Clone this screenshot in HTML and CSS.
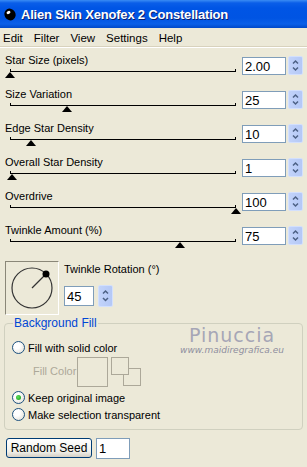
FILE: index.html
```html
<!DOCTYPE html>
<html>
<head>
<meta charset="UTF-8">
<title>Alien Skin Xenofex 2 Constellation</title>
<link rel="stylesheet" href="styles.css">
</head>
<body>
<div class="window">
	<div class="titlebar">
		<svg class="app-icon" width="14" height="14" viewBox="0 0 14 14">
			<ellipse cx="7" cy="7.5" rx="5.5" ry="6" fill="#000" transform="rotate(-30 7 7.5)"/>
			<ellipse cx="5.5" cy="5.5" rx="2" ry="1.5" fill="#fff" transform="rotate(-30 5.5 5.5)"/>
		</svg>
		<span class="title">Alien Skin Xenofex 2 Constellation</span>
	</div>
	<div class="menubar">
		<span>Edit</span><span>Filter</span><span>View</span><span>Settings</span><span>Help</span>
	</div>

	<div class="content">
		<div class="row">
			<div class="control">
				<div class="label">Star Size (pixels)</div>
				<div class="track"><div class="thumb" style="left:0%"></div></div>
			</div>
			<input class="field" type="text" value="2.00">
			<div class="spin"><svg width="13" height="17" viewBox="0 0 13 17"><path d="M4 6.5l2.5-2.5 2.5 2.5M4 10.5l2.5 2.5 2.5-2.5" fill="none" stroke="#4d6185" stroke-width="1.5"/></svg></div>
		</div>
		<div class="row">
			<div class="control">
				<div class="label">Size Variation</div>
				<div class="track"><div class="thumb" style="left:25%"></div></div>
			</div>
			<input class="field" type="text" value="25">
			<div class="spin"><svg width="13" height="17" viewBox="0 0 13 17"><path d="M4 6.5l2.5-2.5 2.5 2.5M4 10.5l2.5 2.5 2.5-2.5" fill="none" stroke="#4d6185" stroke-width="1.5"/></svg></div>
		</div>
		<div class="row">
			<div class="control">
				<div class="label">Edge Star Density</div>
				<div class="track"><div class="thumb" style="left:9.3%"></div></div>
			</div>
			<input class="field" type="text" value="10">
			<div class="spin"><svg width="13" height="17" viewBox="0 0 13 17"><path d="M4 6.5l2.5-2.5 2.5 2.5M4 10.5l2.5 2.5 2.5-2.5" fill="none" stroke="#4d6185" stroke-width="1.5"/></svg></div>
		</div>
		<div class="row">
			<div class="control">
				<div class="label">Overall Star Density</div>
				<div class="track"><div class="thumb" style="left:1%"></div></div>
			</div>
			<input class="field" type="text" value="1">
			<div class="spin"><svg width="13" height="17" viewBox="0 0 13 17"><path d="M4 6.5l2.5-2.5 2.5 2.5M4 10.5l2.5 2.5 2.5-2.5" fill="none" stroke="#4d6185" stroke-width="1.5"/></svg></div>
		</div>
		<div class="row">
			<div class="control">
				<div class="label">Overdrive</div>
				<div class="track"><div class="thumb" style="left:100%"></div></div>
			</div>
			<input class="field" type="text" value="100">
			<div class="spin"><svg width="13" height="17" viewBox="0 0 13 17"><path d="M4 6.5l2.5-2.5 2.5 2.5M4 10.5l2.5 2.5 2.5-2.5" fill="none" stroke="#4d6185" stroke-width="1.5"/></svg></div>
		</div>
		<div class="row">
			<div class="control">
				<div class="label">Twinkle Amount (%)</div>
				<div class="track"><div class="thumb" style="left:75%"></div></div>
			</div>
			<input class="field" type="text" value="75">
			<div class="spin"><svg width="13" height="17" viewBox="0 0 13 17"><path d="M4 6.5l2.5-2.5 2.5 2.5M4 10.5l2.5 2.5 2.5-2.5" fill="none" stroke="#4d6185" stroke-width="1.5"/></svg></div>
		</div>

		<div class="rotation">
			<div class="dial">
				<svg width="51" height="51" viewBox="0 0 51 51">
					<circle cx="26" cy="26" r="20" fill="none" stroke="#333" stroke-width="1.2"/>
					<line x1="26" y1="26" x2="40" y2="12" stroke="#333" stroke-width="1.2"/>
					<circle cx="40" cy="12" r="3.5" fill="#000"/>
				</svg>
			</div>
			<div class="rotation-side">
				<div class="label">Twinkle Rotation (°)</div>
				<div class="rot-input">
					<input class="field small" type="text" value="45">
					<div class="spin"><svg width="13" height="20" viewBox="0 0 13 20"><path d="M4 7.5l2.5-2.5 2.5 2.5M4 12l2.5 2.5 2.5-2.5" fill="none" stroke="#4d6185" stroke-width="1.5"/></svg></div>
				</div>
			</div>
		</div>

		<fieldset class="group">
			<legend>Background Fill</legend>
			<div class="watermark">
				<div class="wm-name">Pinuccia</div>
				<div class="wm-url">www.maidiregrafica.eu</div>
			</div>
			<div class="radio-row"><span class="radio"></span>Fill with solid color</div>
			<div class="fill-color">
				<span class="fill-label">Fill Color</span>
				<span class="swatch"></span>
				<span class="swap"><span class="sq sq2"></span><span class="sq sq1"></span></span>
			</div>
			<div class="radio-row"><span class="radio checked"></span>Keep original image</div>
			<div class="radio-row"><span class="radio"></span>Make selection transparent</div>
		</fieldset>

		<div class="seed">
			<button class="btn">Random Seed</button>
			<input class="field seed-field" type="text" value="1">
		</div>
	</div>
</div>
</body>
</html>
```

FILE: styles.css
```css
html, body {
	margin : 0;
	padding : 0;
	background : #ece9d8;
}
body {
	font-family : "Liberation Sans", Arial, sans-serif;
	font-size : 11px;
	color : #000;
}
.window {
	width : 307px;
	height : 467px;
	background : #ece9d8;
	overflow : hidden;
	position : relative;
}

/* title bar */
.titlebar {
	height : 28px;
	display : flex;
	align-items : center;
	padding-left : 3px;
	gap : 4px;
	background : linear-gradient(#3a8cf4 0, #0a5ee8 3px, #0055e5 8px, #0054e3 18px, #0a5fe8 24px, #0048c8 28px);
}
.title {
	color : #fff;
	font-family : "Liberation Sans", Arial, sans-serif;
	font-weight : bold;
	font-size : 13px;
	letter-spacing : -0.2px;
	text-shadow : 1px 1px 0 #0a1e6e;
}
.app-icon {
	display : block;
}

/* menu */
.menubar {
	height : 19px;
	display : flex;
	align-items : center;
	gap : 11px;
	padding-left : 3px;
	font-size : 11.5px;
	border-bottom : 1px solid #fff;
	box-shadow : 0 -1px 0 #d8d2bd inset;
}

/* slider rows */
.content {
	padding : 5px 0 0 0;
}
.row {
	display : flex;
	align-items : flex-start;
	height : 34px;
}
.control {
	width : 242px;
}
.label {
	padding-left : 5px;
	height : 14px;
	line-height : 14px;
}
.track {
	position : relative;
	margin-left : 10px;
	width : 226px;
	height : 12px;
}
.track::before {
	content : '';
	position : absolute;
	left : 0;
	right : 0;
	top : 4px;
	border-bottom : 1px solid #000;
}
.track::after {
	content : '';
	position : absolute;
	left : 0;
	right : 0;
	top : 2px;
	height : 3px;
	border-left : 1px solid #000;
	border-right : 1px solid #000;
}
.thumb {
	position : absolute;
	top : 5px;
	width : 0;
	height : 0;
	margin-left : -5px;
	border-left : 5.5px solid transparent;
	border-right : 5.5px solid transparent;
	border-bottom : 6px solid #000;
}
.field {
	box-sizing : border-box;
	width : 44px;
	height : 18px;
	margin : 4px 0 0 0;
	padding : 0 0 0 2px;
	border : 1px solid #7f9db9;
	background : #fff;
	font-family : "Liberation Sans", Arial, sans-serif;
	font-size : 13px;
	color : #000;
	outline : none;
}
.spin {
	box-sizing : border-box;
	width : 15px;
	height : 19px;
	margin : 3px 0 0 2px;
	border : 1px solid #d3e0fd;
	border-radius : 2px;
	background : linear-gradient(90deg, #c2d3fa, #b4c8f6);
}
.spin svg {
	display : block;
}

/* rotation */
.rotation {
	display : flex;
	gap : 5px;
	padding : 4px 0 0 5px;
}
.dial {
	box-sizing : border-box;
	width : 54px;
	height : 54px;
	border : 1px solid;
	border-color : #8a8778 #fff #fff #8a8778;
}
.dial svg {
	display : block;
}
.rotation-side .label {
	padding : 1px 0 0 0;
	height : 16px;
}
.rot-input {
	display : flex;
	gap : 4px;
	padding-top : 7px;
}
.field.small {
	width : 30px;
	height : 20px;
	margin : 1px 0 0 0;
}
.rot-input .spin {
	height : 22px;
	margin : 0;
}

/* group box */
.group {
	position : relative;
	margin : 1px 4px 0 4px;
	padding : 9px 0 6px 7px;
	border : 1px solid #d0d0bf;
	border-radius : 4px;
}
.group legend {
	color : #0046d5;
	padding : 0 1px;
	margin-left : 1px;
	font-size : 12px;
}
.radio-row {
	display : flex;
	align-items : center;
	gap : 3px;
	height : 17px;
	font-size : 11px;
}
.radio {
	box-sizing : border-box;
	width : 13px;
	height : 13px;
	border-radius : 50%;
	border : 1px solid #1c5180;
	background : radial-gradient(circle at 35% 35%, #fff 30%, #dcd9cd);
	display : flex;
	align-items : center;
	justify-content : center;
}
.radio.checked::after {
	content : '';
	width : 5px;
	height : 5px;
	border-radius : 50%;
	background : radial-gradient(circle at 40% 40%, #5ee35e, #149314);
}
.fill-color {
	display : flex;
	align-items : flex-start;
	height : 33px;
	padding : 1px 0 0 21px;
	box-sizing : border-box;
}
.fill-label {
	color : #aca899;
	margin-top : 8px;
	width : 44px;
}
.swatch {
	box-sizing : border-box;
	width : 31px;
	height : 30px;
	border : 1px solid #aca899;
}
.swap {
	position : relative;
	width : 32px;
	height : 30px;
	margin-left : 3px;
}
.sq {
	position : absolute;
	box-sizing : border-box;
	width : 18px;
	height : 18px;
	border : 1px solid #aca899;
	background : #ece9d8;
}
.sq1 {
	left : 0;
	top : 0;
}
.sq2 {
	left : 12px;
	top : 11px;
}
.watermark {
	position : absolute;
	left : 162px;
	top : -4px;
	text-align : center;
	color : #a6a6b6;
	width : 130px;
}
.wm-name {
	font-family : "DejaVu Sans", sans-serif;
	font-size : 19px;
	letter-spacing : 1px;
	line-height : 19px;
}
.wm-url {
	font-family : "DejaVu Sans", sans-serif;
	font-style : italic;
	font-size : 9px;
	color : #8e8e9e;
}

/* seed */
.seed {
	display : flex;
	gap : 4px;
	padding : 8px 0 0 6px;
}
.btn {
	box-sizing : border-box;
	width : 86px;
	height : 20px;
	border : 1px solid #003c74;
	border-radius : 3px;
	background : linear-gradient(#fff, #f0f0ea 70%, #d6d0c5);
	font-family : "Liberation Sans", Arial, sans-serif;
	font-size : 12px;
	padding : 0;
}
.field.seed-field {
	width : 34px;
	height : 21px;
	margin : 0;
}
```
